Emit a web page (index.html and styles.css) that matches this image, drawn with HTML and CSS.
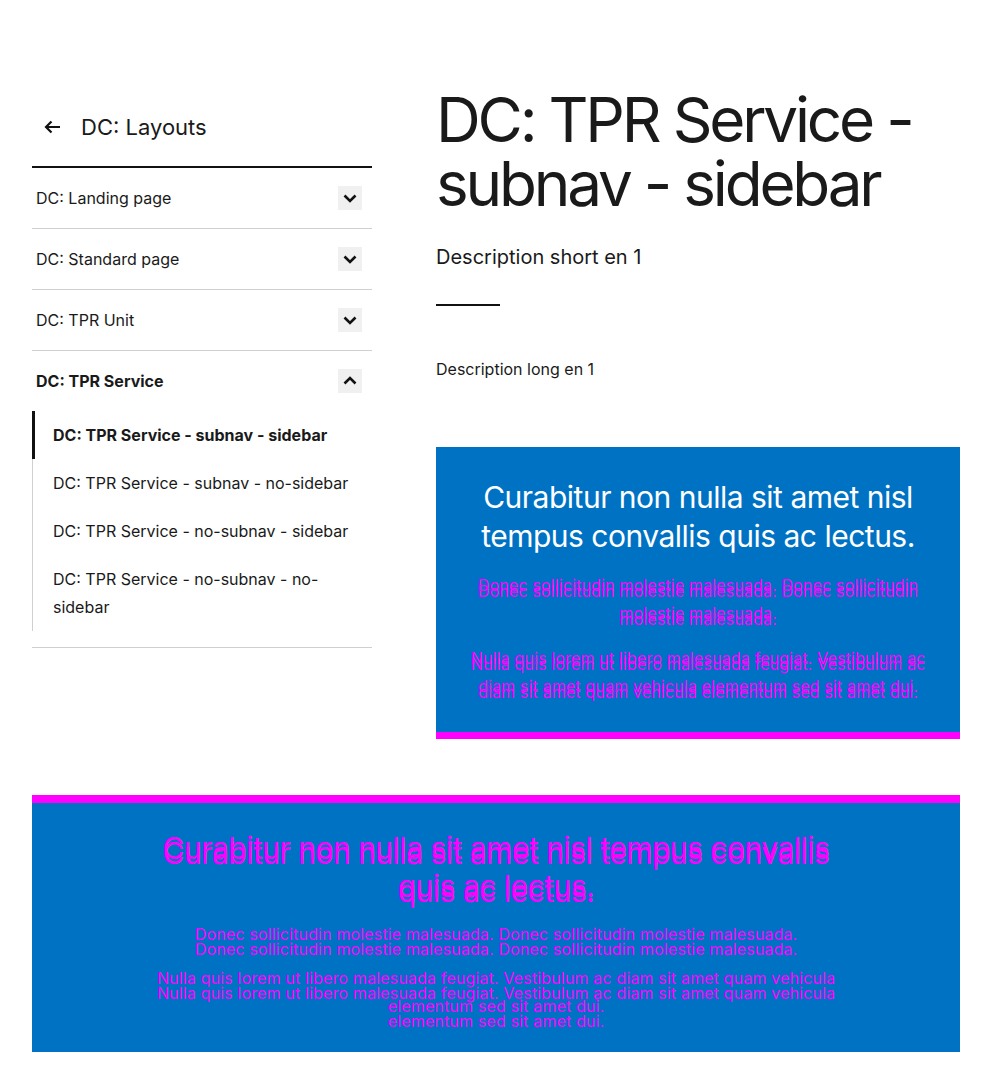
FILE: index.html
```html
<!DOCTYPE html>
<html lang="en">
<head>
<meta charset="utf-8">
<title>DC: TPR Service - subnav - sidebar</title>
<link rel="stylesheet" href="styles.css">
</head>
<body>
<div class="page">
  <div class="top">
    <aside class="sidenav">
      <a class="back" href="#">
        <svg class="back-icon" width="20" height="20" viewBox="0 0 20 20" aria-hidden="true"><path d="M18 10H4M9.5 4.5L4 10l5.5 5.5" fill="none" stroke="#111" stroke-width="2.2"/></svg>
        <span>DC: Layouts</span>
      </a>
      <ul class="nav-list">
        <li class="nav-item">
          <div class="nav-row"><span>DC: Landing page</span><span class="chev"><svg width="24" height="24" viewBox="0 0 24 24"><path d="M6.5 9.5l5.5 5.5 5.5-5.5" fill="none" stroke="#111" stroke-width="2.6"/></svg></span></div>
        </li>
        <li class="nav-item">
          <div class="nav-row"><span>DC: Standard page</span><span class="chev"><svg width="24" height="24" viewBox="0 0 24 24"><path d="M6.5 9.5l5.5 5.5 5.5-5.5" fill="none" stroke="#111" stroke-width="2.6"/></svg></span></div>
        </li>
        <li class="nav-item">
          <div class="nav-row"><span>DC: TPR Unit</span><span class="chev"><svg width="24" height="24" viewBox="0 0 24 24"><path d="M6.5 9.5l5.5 5.5 5.5-5.5" fill="none" stroke="#111" stroke-width="2.6"/></svg></span></div>
        </li>
        <li class="nav-item open">
          <div class="nav-row bold"><span>DC: TPR Service</span><span class="chev"><svg width="24" height="24" viewBox="0 0 24 24"><path d="M6.5 14.5l5.5-5.5 5.5 5.5" fill="none" stroke="#111" stroke-width="2.6"/></svg></span></div>
          <ul class="sub-list">
            <li class="sub-item active">DC: TPR Service - subnav - sidebar</li>
            <li class="sub-item">DC: TPR Service - subnav - no-sidebar</li>
            <li class="sub-item">DC: TPR Service - no-subnav - sidebar</li>
            <li class="sub-item">DC: TPR Service - no-subnav - no-sidebar</li>
          </ul>
        </li>
      </ul>
    </aside>
    <main class="content">
      <h1 class="title">DC: TPR Service - subnav - sidebar</h1>
      <p class="short">Description short en 1</p>
      <hr class="rule">
      <p class="long">Description long en 1</p>
      <section class="promo promo-side">
        <h2 class="promo-title">Curabitur non nulla sit amet nisl tempus convallis quis ac lectus.</h2>
        <p class="promo-text">Donec sollicitudin molestie malesuada. Donec sollicitudin molestie malesuada.</p>
        <p class="promo-text">Nulla quis lorem ut libero malesuada feugiat. Vestibulum ac diam sit amet quam vehicula elementum sed sit amet dui.</p>
      </section>
    </main>
  </div>
  <section class="promo promo-wide">
    <div class="promo-inner">
      <h2 class="promo-title">Curabitur non nulla sit amet nisl tempus convallis quis ac lectus.</h2>
      <p class="promo-text">Donec sollicitudin molestie malesuada. Donec sollicitudin molestie malesuada.</p>
      <p class="promo-text">Nulla quis lorem ut libero malesuada feugiat. Vestibulum ac diam sit amet quam vehicula elementum sed sit amet dui.</p>
    </div>
  </section>
</div>
</body>
</html>
```
FILE: styles.css
```css
* { box-sizing: border-box; }
body {
  margin: 0;
  background: #fff;
  color: #1a1a1a;
  font-family: Inter, "Liberation Sans", sans-serif;
}
ul { list-style: none; margin: 0; padding: 0; }
.page { padding: 88px 32px 0 32px; }
.top { display: flex; gap: 64px; align-items: flex-start; }

.sidenav { width: 340px; flex: none; }
.back {
  display: flex; gap: 19px; align-items: flex-start;
  padding: 16px 0 0 10px; height: 80px;
  color: #1a1a1a; text-decoration: none;
  font-size: 22px; line-height: 46px;
  border-bottom: 2px solid #111;
}
.back-icon { margin-top: 13px; }
.nav-item { border-bottom: 1px solid #cfcfcf; }
.nav-row {
  display: flex; justify-content: space-between; align-items: center;
  height: 60px; padding: 0 10px 0 4px; font-size: 16px;
}
.nav-row.bold { font-weight: 700; }
.chev { width: 24px; height: 24px; background: #f0f0f0; display: flex; }
.open { padding-bottom: 16px; }
.sub-list { border-left: 1px solid #cfcfcf; }
.sub-item {
  padding: 10px 20px 10px 18px; font-size: 16px; line-height: 28px;
  margin-left: -1px; border-left: 3px solid transparent;
}
.sub-item.active { border-left-color: #111; font-weight: 700; }

.content { flex: 1; min-width: 0; }
.title {
  margin: 0; font-weight: 400; font-size: 62px; line-height: 64px;
  letter-spacing: -3.2px;
}
.short { margin: 25px 0 0; font-size: 20px; line-height: 32px; }
.rule { margin: 31px 0 0; width: 64px; border: 0; border-top: 2px solid #111; }
.long { margin: 49px 0 0; font-size: 16px; line-height: 28px; }

.promo { background: #0072c4; color: #fff; text-align: center; }
.promo-side {
  margin-top: 64px; padding: 31px 32px 32px;
  border-bottom: 7px solid #ff00ff;
}
.promo-title {
  margin: 0; font-weight: 400; font-size: 30px; line-height: 39px;
  letter-spacing: -0.5px;
}
.promo-text {
  margin: 15px 0 0; font-size: 16px; line-height: 28px; letter-spacing: 0.15px;
  color: #ff00ff; text-shadow: 0 6px 0 #ff00ff;
}
.promo-text + .promo-text { margin-top: 17px; }

.promo-wide {
  margin-top: 56px; border-top: 8px solid #ff00ff;
  padding: 26px 32px 32px;
}
.promo-inner { max-width: 700px; margin: 0 auto; }
.promo-wide .promo-title { color: #ff00ff; text-shadow: 0 5px 0 #ff00ff; line-height: 38px; }
.promo-wide .promo-text { text-shadow: 0 15px 0 #ff00ff; margin-top: 15px; }
.promo-wide .promo-text + .promo-text { margin-top: 16px; }
```
